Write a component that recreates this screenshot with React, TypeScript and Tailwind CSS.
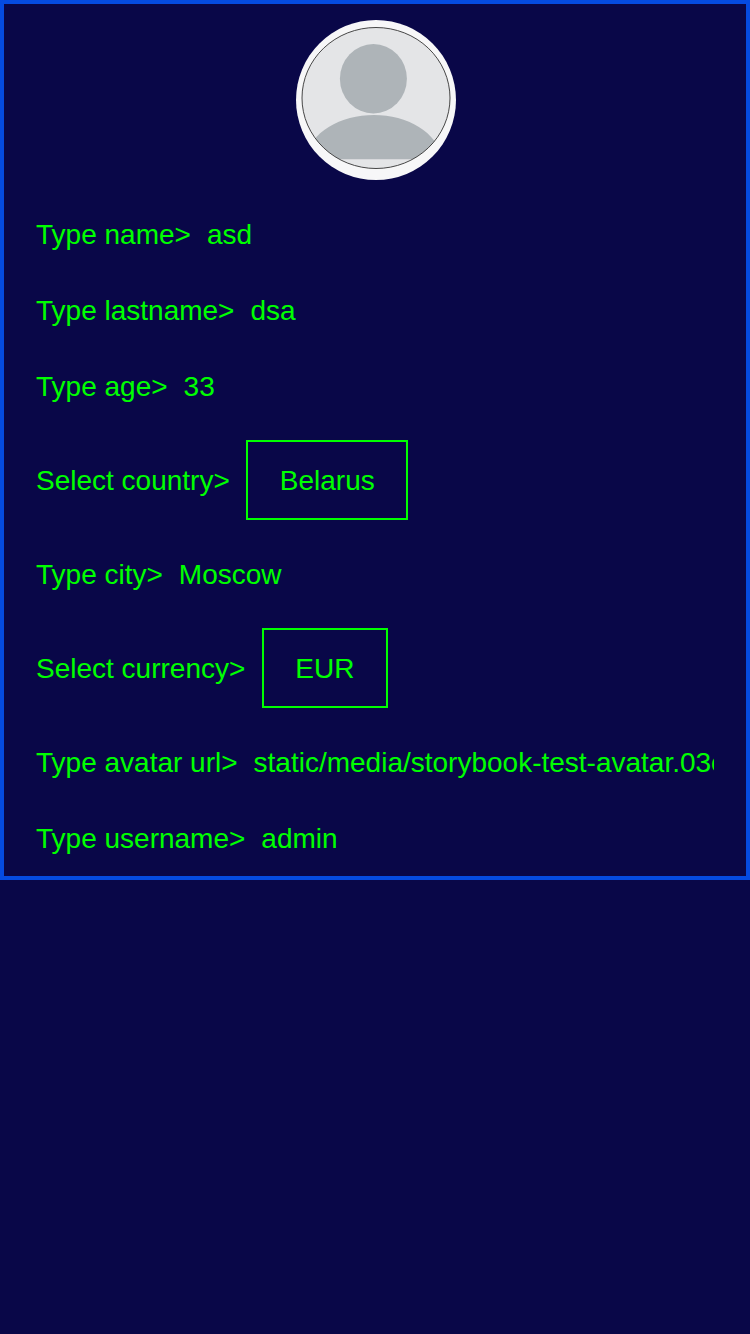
import type { ReactNode } from "react";

function Row({ label, children }: { label: string; children: ReactNode }) {
  return (
    <div className="flex items-center whitespace-nowrap leading-8">
      <span className="mr-4 shrink-0">{label}&gt;</span>
      {children}
    </div>
  );
}

function Value({ children }: { children: ReactNode }) {
  return <span className="min-w-0 flex-1 overflow-hidden">{children}</span>;
}

function SelectRow({ label, value, buttonClass }: { label: string; value: string; buttonClass: string }) {
  return (
    <div className="flex items-center whitespace-nowrap leading-8">
      <span className="mr-4 shrink-0 pt-0.5">{label}&gt;</span>
      <button className={`h-20 border-2 border-[#00ff00] pt-0.5 text-center ${buttonClass}`}>
        {value}
      </button>
    </div>
  );
}

function Avatar() {
  return (
    <svg className="size-40" viewBox="0 0 160 160">
      <defs>
        <clipPath id="disc">
          <ellipse cx="80" cy="78" rx="74" ry="70.5" />
        </clipPath>
      </defs>
      <circle cx="80" cy="80" r="80" fill="#f7f7f8" />
      <ellipse cx="80" cy="78" rx="74" ry="70.5" fill="#e4e5e7" />
      <g clipPath="url(#disc)" fill="#aeb4b8">
        <ellipse cx="77.4" cy="58.8" rx="33.5" ry="34.7" />
        <path d="M10 139.200C13 112 45 95 78 95S142 112 146 139.200Z" />
      </g>
      <ellipse cx="80" cy="78" rx="74" ry="70.5" fill="none" stroke="#333" strokeWidth="0.9" />
    </svg>
  );
}

export default function App() {
  return (
    <div className="min-h-[1334px] bg-[#090748] font-['Liberation_Sans',Arial,sans-serif] text-[28px] text-[#00ff00]">
      <main className="flex h-[880px] flex-col overflow-hidden border-4 border-[#054be0] px-8 pt-4">
        <div className="mb-[39px] flex justify-center pl-0.5">
          <Avatar />
        </div>
        <div className="flex flex-col gap-11">
          <Row label="Type name"><Value>asd</Value></Row>
          <Row label="Type lastname"><Value>dsa</Value></Row>
          <Row label="Type age"><Value>33</Value></Row>
        </div>
        <div className="mt-[37px] flex flex-col gap-[39px]">
          <SelectRow label="Select country" value="Belarus" buttonClass="w-[162px] pl-px" />
          <Row label="Type city"><Value>Moscow</Value></Row>
        </div>
        <div className="mt-[37px] flex flex-col gap-[39px]">
          <SelectRow label="Select currency" value="EUR" buttonClass="ml-[0.6px] w-[126px]" />
          <Row label="Type avatar url"><Value>static/media/storybook-test-avatar.03c5d1.jpg</Value></Row>
        </div>
        <div className="mt-11">
          <Row label="Type username"><Value>admin</Value></Row>
        </div>
      </main>
    </div>
  );
}
